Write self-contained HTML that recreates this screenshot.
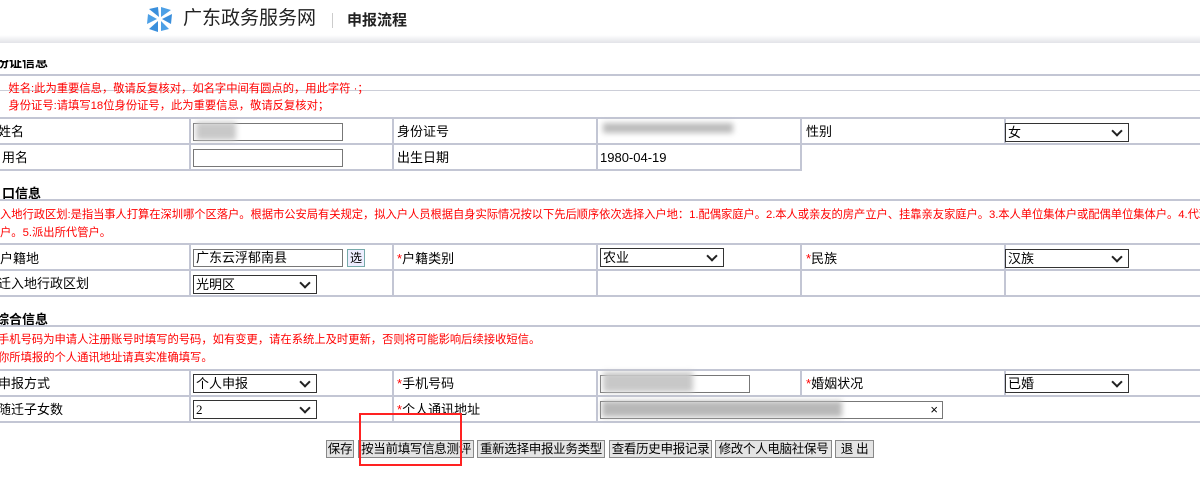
<!DOCTYPE html>
<html><head><meta charset="utf-8"><style>
*{margin:0;padding:0;box-sizing:border-box}
body{width:1200px;height:481px;background:#fff;position:relative;overflow:hidden;font-family:"Liberation Sans","Noto Sans CJK SC",sans-serif;color:#000}
.a{position:absolute}
.hl{position:absolute;left:0;width:1200px;height:2px;background:#c3c6d4}
.vl{position:absolute;width:2px;background:#c3c6d4}
.t{position:absolute;font-size:13px;line-height:16px;white-space:nowrap}
.r{position:absolute;font-size:11.3px;line-height:14px;color:#f00;white-space:nowrap}
.h{position:absolute;font-size:13px;font-weight:bold;white-space:nowrap}
.in{position:absolute;height:18px;border:1px solid #777;background:#fff;font-size:13px;line-height:16px;padding-left:2px;white-space:nowrap}
.sel{position:absolute;height:19px;border:1px solid #333;background:#fff;font-size:13px;line-height:17px;padding-left:2px;white-space:nowrap}
.sel:after{content:"";position:absolute;right:7px;top:3px;width:6px;height:6px;border-right:2px solid #222;border-bottom:2px solid #222;transform:rotate(45deg)}
.b{position:absolute;top:440px;height:18px;border:1px solid #888;background:#e4e4e4;font-size:12.5px;line-height:16px;white-space:nowrap;text-align:center;overflow:hidden;letter-spacing:-0.3px}
.s{color:#f00}
.blur{position:absolute;background:#c8c8c8;filter:blur(3px)}
</style></head><body>
<div class="a" style="left:0;top:0;width:1200px;height:35px;background:#fff"></div>
<div class="a" style="left:0;top:35px;width:1200px;height:8px;background:linear-gradient(#fff,#e2e3e8)"></div>
<svg class="a" style="left:146px;top:5px" width="28" height="28" viewBox="0 0 28 28">
<path d="M3 4 L12 2 L13 12 Z" fill="#3a8fdc"/><path d="M15 2 L25 5 L15 12 Z" fill="#4da0e6"/>
<path d="M26 9 L25 19 L16 14 Z" fill="#3a8fdc"/><path d="M23 24 L15 26 L15 16 Z" fill="#4da0e6"/>
<path d="M12 27 L3 24 L12 16 Z" fill="#3a8fdc"/><path d="M1 19 L2 9 L11 14 Z" fill="#4da0e6"/>
<circle cx="14" cy="14" r="2" fill="#fff"/></svg>
<div class="a" style="left:183px;top:6px;font-size:19px;line-height:26px;color:#222">广东政务服务网</div>
<div class="a" style="left:332px;top:13px;width:1px;height:15px;background:#ccc"></div>
<div class="a" style="left:347px;top:10px;font-size:15px;font-weight:bold;line-height:22px;color:#222">申报流程</div>

<div class="a" style="left:0;top:60px;width:200px;height:9px;overflow:hidden"><div class="h" style="left:-4px;top:-8px">份证信息</div></div>
<div class="hl" style="top:74px"></div>
<div class="hl" style="top:90px;height:1px;background:#ccced8"></div>
<div class="r" style="left:-6px;top:82px">、 姓名:此为重要信息，敬请反复核对，如名字中间有圆点的，用此字符 ·；</div>
<div class="r" style="left:-6px;top:99px">、 身份证号:请填写18位身份证号，此为重要信息，敬请反复核对；</div>
<div class="hl" style="top:117px"></div>
<div class="hl" style="top:143px"></div>
<div class="a" style="left:0;top:169px;width:802px;height:2px;background:#c3c6d4"></div>
<div class="vl" style="left:189px;top:117px;height:54px"></div>
<div class="vl" style="left:392px;top:117px;height:54px"></div>
<div class="vl" style="left:596px;top:117px;height:54px"></div>
<div class="vl" style="left:800px;top:117px;height:54px"></div>
<div class="vl" style="left:1004px;top:117px;height:28px"></div>
<div class="t" style="left:-2px;top:124px">姓名</div>
<div class="in" style="left:193px;top:123px;width:150px"></div>
<div class="blur" style="left:196px;top:122px;width:40px;height:18px"></div>
<div class="t" style="left:397px;top:124px">身份证号</div>
<div class="blur" style="left:603px;top:123px;width:130px;height:10px;background:#bbb"></div>
<div class="t" style="left:806px;top:124px">性别</div>
<div class="sel" style="left:1005px;top:123px;width:124px">女</div>
<div class="t" style="left:2px;top:150px">用名</div>
<div class="in" style="left:193px;top:149px;width:150px"></div>
<div class="t" style="left:397px;top:150px">出生日期</div>
<div class="t" style="left:600px;top:150px">1980-04-19</div>

<div class="h" style="left:2px;top:183px">口信息</div>
<div class="hl" style="top:199px"></div>
<div class="r" style="left:0;top:208px;letter-spacing:-0.05px">入地行政区划:是指当事人打算在深圳哪个区落户。根据市公安局有关规定，拟入户人员根据自身实际情况按以下先后顺序依次选择入户地：1.配偶家庭户。2.本人或亲友的房产立户、挂靠亲友家庭户。3.本人单位集体户或配偶单位集体户。4.代理机构集</div>
<div class="r" style="left:0;top:226px">户。5.派出所代管户。</div>
<div class="hl" style="top:243px"></div>
<div class="hl" style="top:269px"></div>
<div class="hl" style="top:295px"></div>
<div class="vl" style="left:189px;top:243px;height:54px"></div>
<div class="vl" style="left:392px;top:243px;height:54px"></div>
<div class="vl" style="left:596px;top:243px;height:54px"></div>
<div class="vl" style="left:800px;top:243px;height:54px"></div>
<div class="vl" style="left:1004px;top:243px;height:54px"></div>
<div class="t" style="left:0;top:251px">户籍地</div>
<div class="in" style="left:193px;top:249px;width:150px">广东云浮郁南县</div>
<div class="a" style="left:347px;top:249px;width:18px;height:18px;border:1px solid #7aa;background:#eef;font-size:12px;line-height:16px;text-align:center">选</div>
<div class="t" style="left:397px;top:251px"><span class="s">*</span>户籍类别</div>
<div class="sel" style="left:600px;top:248px;width:124px">农业</div>
<div class="t" style="left:806px;top:251px"><span class="s">*</span>民族</div>
<div class="sel" style="left:1005px;top:249px;width:124px">汉族</div>
<div class="t" style="left:-2px;top:276px">迁入地行政区划</div>
<div class="sel" style="left:193px;top:275px;width:124px">光明区</div>

<div class="h" style="left:-4px;top:309px">综合信息</div>
<div class="hl" style="top:325px"></div>
<div class="r" style="left:-2px;top:333px">手机号码为申请人注册账号时填写的号码，如有变更，请在系统上及时更新，否则将可能影响后续接收短信。</div>
<div class="r" style="left:-2px;top:351px">你所填报的个人通讯地址请真实准确填写。</div>
<div class="hl" style="top:369px"></div>
<div class="hl" style="top:395px"></div>
<div class="hl" style="top:421px"></div>
<div class="vl" style="left:189px;top:369px;height:54px"></div>
<div class="vl" style="left:392px;top:369px;height:54px"></div>
<div class="vl" style="left:596px;top:369px;height:54px"></div>
<div class="vl" style="left:800px;top:369px;height:28px"></div>
<div class="vl" style="left:1004px;top:369px;height:28px"></div>
<div class="t" style="left:-2px;top:376px">申报方式</div>
<div class="sel" style="left:193px;top:374px;width:124px">个人申报</div>
<div class="t" style="left:397px;top:376px"><span class="s">*</span>手机号码</div>
<div class="in" style="left:600px;top:375px;width:150px"></div>
<div class="blur" style="left:603px;top:372px;width:90px;height:20px"></div>
<div class="t" style="left:806px;top:376px"><span class="s">*</span>婚姻状况</div>
<div class="sel" style="left:1005px;top:374px;width:124px">已婚</div>
<div class="t" style="left:-2px;top:402px">随迁子女数</div>
<div class="sel" style="left:193px;top:400px;width:124px;font-family:'Liberation Serif',serif">2</div>
<div class="t" style="left:397px;top:402px"><span class="s">*</span>个人通讯地址</div>
<div class="in" style="left:600px;top:401px;width:343px;text-align:right;padding-right:4px">×</div>
<div class="blur" style="left:602px;top:401px;width:240px;height:16px;background:#b8b8b8"></div>

<div class="b" style="left:326px;width:28px">保存</div>
<div class="b" style="left:358px;width:116px">按当前填写信息测评</div>
<div class="b" style="left:477px;width:128px">重新选择申报业务类型</div>
<div class="b" style="left:609px;width:103px">查看历史申报记录</div>
<div class="b" style="left:715px;width:117px">修改个人电脑社保号</div>
<div class="b" style="left:835px;width:39px">退 出</div>
<div class="a" style="left:359px;top:413px;width:103px;height:53px;border:2px solid #f22"></div>
</body></html>
